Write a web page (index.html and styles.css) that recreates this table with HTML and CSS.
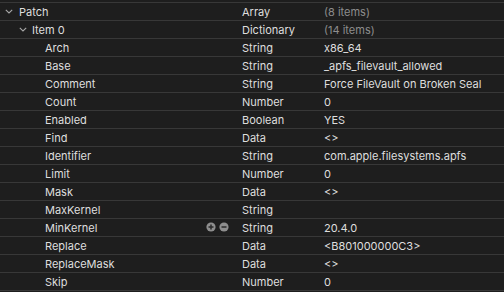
FILE: index.html
```html
<!DOCTYPE html>
<html>
<head>
<meta charset="utf-8">
<link rel="stylesheet" href="styles.css">
</head>
<body>
<div class="table">
  <div class="row"><div class="key l0"><span class="chev"><svg width="8" height="5" viewBox="0 0 8 5"><path d="M0.8 0.8 L4 4 L7.2 0.8" fill="none" stroke="#a8a8a8" stroke-width="1.1"/></svg></span>Patch</div><div class="type">Array</div><div class="val dim">(8 items)</div></div>
  <div class="row"><div class="key l1"><span class="chev"><svg width="8" height="5" viewBox="0 0 8 5"><path d="M0.8 0.8 L4 4 L7.2 0.8" fill="none" stroke="#a8a8a8" stroke-width="1.1"/></svg></span>Item 0</div><div class="type">Dictionary</div><div class="val dim">(14 items)</div></div>
  <div class="row"><div class="key l2">Arch</div><div class="type">String</div><div class="val">x86_64</div></div>
  <div class="row"><div class="key l2">Base</div><div class="type">String</div><div class="val">_apfs_filevault_allowed</div></div>
  <div class="row"><div class="key l2">Comment</div><div class="type">String</div><div class="val">Force FileVault on Broken Seal</div></div>
  <div class="row"><div class="key l2">Count</div><div class="type">Number</div><div class="val">0</div></div>
  <div class="row"><div class="key l2">Enabled</div><div class="type">Boolean</div><div class="val">YES</div></div>
  <div class="row"><div class="key l2">Find</div><div class="type">Data</div><div class="val">&lt;&gt;</div></div>
  <div class="row"><div class="key l2">Identifier</div><div class="type">String</div><div class="val">com.apple.filesystems.apfs</div></div>
  <div class="row"><div class="key l2">Limit</div><div class="type">Number</div><div class="val">0</div></div>
  <div class="row"><div class="key l2">Mask</div><div class="type">Data</div><div class="val">&lt;&gt;</div></div>
  <div class="row"><div class="key l2">MaxKernel</div><div class="type">String</div><div class="val"></div></div>
  <div class="row"><div class="key l2">MinKernel<span class="ctrls"><svg width="23" height="10" viewBox="0 0 23 10"><circle cx="5" cy="5" r="4.6" fill="#8e8e8e"/><path d="M5 2.5 V7.5 M2.5 5 H7.5" stroke="#2a2a2a" stroke-width="1.5"/><circle cx="18" cy="5" r="4.6" fill="#8e8e8e"/><path d="M15.5 5 H20.5" stroke="#2a2a2a" stroke-width="1.5"/></svg></span></div><div class="type">String</div><div class="val">20.4.0</div></div>
  <div class="row"><div class="key l2">Replace</div><div class="type">Data</div><div class="val">&lt;B801000000C3&gt;</div></div>
  <div class="row"><div class="key l2">ReplaceMask</div><div class="type">Data</div><div class="val">&lt;&gt;</div></div>
  <div class="row"><div class="key l2">Skip</div><div class="type">Number</div><div class="val">0</div></div>
</div>
</body>
</html>
```

FILE: styles.css
```css
html, body {
  margin: 0;
  padding: 0;
  background: #1e1e1e;
  overflow: hidden;
}
body {
  width: 504px;
  height: 292px;
  font-family: Inter, "Noto Sans", "Liberation Sans", sans-serif;
  font-size: 11px;
  color: #dedede;
}
.table {
  padding-top: 2px;
}
.row {
  display: grid;
  grid-template-columns: 242px 82px 1fr;
  height: 17px;
  border-bottom: 1px solid #383838;
  align-items: center;
  white-space: nowrap;
}
.row:first-child {
  border-top: 1px solid #383838;
}
.key {
  position: relative;
  display: flex;
  align-items: center;
  height: 17px;
}
.l0 { padding-left: 19px; }
.l1 { padding-left: 32px; }
.l2 { padding-left: 45px; }
.chev {
  position: absolute;
  width: 8px;
  height: 5px;
  top: 6px;
  display: block;
}
.chev svg { display: block; }
.l0 .chev { left: 5px; }
.l1 .chev { left: 19px; }
.ctrls {
  position: absolute;
  left: 206px;
  top: 3px;
  display: block;
  height: 10px;
}
.ctrls svg { display: block; }
.dim { color: #8d8d8d; }
```
